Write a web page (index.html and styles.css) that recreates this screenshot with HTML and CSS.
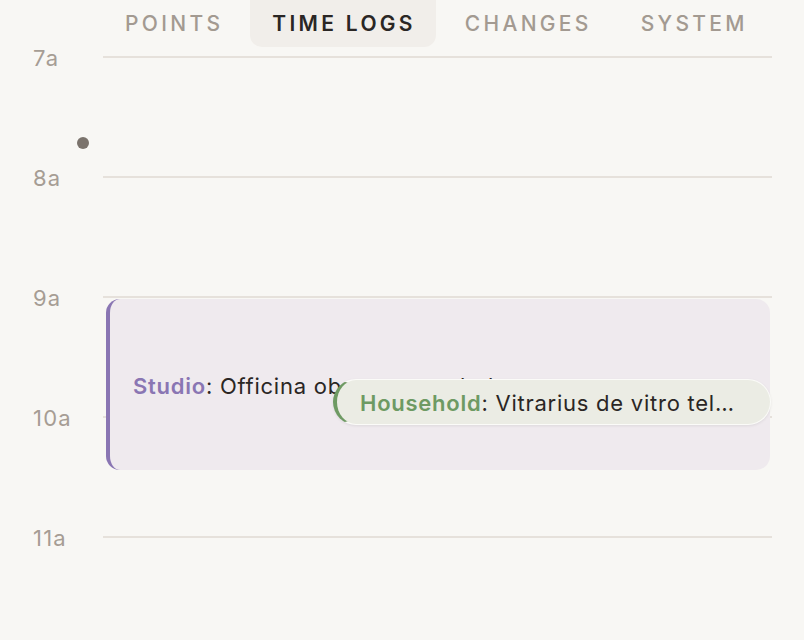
FILE: index.html
```html
<!DOCTYPE html>
<html lang="en">
<head>
    <meta charset="UTF-8">
    <meta name="viewport" content="width=device-width, initial-scale=1.0">
    <title>Time Logs</title>
    <link rel="stylesheet" href="styles.css">
</head>
<body>

    <nav class="tabs">
        <div class="tab">Points</div>
        <div class="tab active">Time Logs</div>
        <div class="tab">Changes</div>
        <div class="tab">System</div>
    </nav>

    <div class="timeline">
        <div class="hour"><span class="hour-label">7a</span><div class="hour-line"></div></div>
        <div class="hour"><span class="hour-label">8a</span><div class="hour-line"></div></div>
        <div class="hour"><span class="hour-label">9a</span><div class="hour-line"></div></div>
        <div class="hour"><span class="hour-label">10a</span><div class="hour-line"></div></div>
        <div class="hour"><span class="hour-label">11a</span><div class="hour-line"></div></div>

        <div class="now-dot"></div>

        <div class="log log-studio">
            <span class="log-text"><b>Studio</b>: Officina obscura et tabula</span>
        </div>

        <div class="log log-household">
            <span class="log-text"><b>Household</b>: Vitrarius de vitro tela fenestrae</span>
        </div>
    </div>

</body>
</html>
```

FILE: styles.css
```css
body {
    font-family: Inter, "Noto Sans", sans-serif;
    background-color: #f8f7f4;
    color: #2a2624;
    margin: 0;
    height: 640px;
    overflow: hidden;
}
.tabs {
    display: flex;
    gap: 7px;
    padding-left: 103px;
    height: 47px;
}
.tab {
    display: flex;
    align-items: center;
    padding: 0 20px 0 22px;
    font-size: 21px;
    font-weight: 500;
    letter-spacing: 3.3px;
    text-transform: uppercase;
    color: #a39a91;
    border-radius: 0 0 12px 12px;
}
.tab.active {
    background-color: #f1eeea;
    color: #2a2624;
    font-weight: 600;
}
.timeline {
    position: relative;
    margin-top: 9px;
}
.hour {
    display: grid;
    grid-template-columns: 103px 1fr;
    height: 120px;
}
.hour-label {
    padding-left: 33px;
    margin-top: -10px;
    line-height: 24px;
    height: 24px;
    font-size: 22px;
    letter-spacing: 1.2px;
    color: #a69d94;
}
.hour-line {
    border-top: 2px solid #e6e1db;
    margin-right: 32px;
}
.now-dot {
    position: absolute;
    left: 77px;
    top: 81px;
    width: 12px;
    height: 12px;
    border-radius: 50%;
    background-color: #7b736c;
}
.log {
    position: absolute;
    display: flex;
    align-items: center;
    box-sizing: border-box;
    overflow: hidden;
    white-space: nowrap;
    font-size: 22px;
    letter-spacing: 0.75px;
}
.log-text {
    overflow: hidden;
    text-overflow: ellipsis;
}
.log-studio {
    left: 106px;
    top: 243px;
    width: 664px;
    height: 171px;
    padding: 2px 0 0 23px;
    background-color: #efeaee;
    border-left: 4px solid #8a76b3;
    border-radius: 14px;
}
.log-studio b {
    color: #8a76b3;
}
.log-household {
    left: 333px;
    top: 323px;
    width: 438px;
    height: 46px;
    padding: 1px 25px 0 23px;
    background-color: #ebece4;
    border: 1px solid #fbfbf8;
    border-left: 4px solid #6e9a63;
    border-radius: 23px;
    box-shadow: 0 1px 3px rgba(0, 0, 0, 0.08);
}
.log-household b {
    color: #6e9a63;
}
b {
    font-weight: 600;
}
```
